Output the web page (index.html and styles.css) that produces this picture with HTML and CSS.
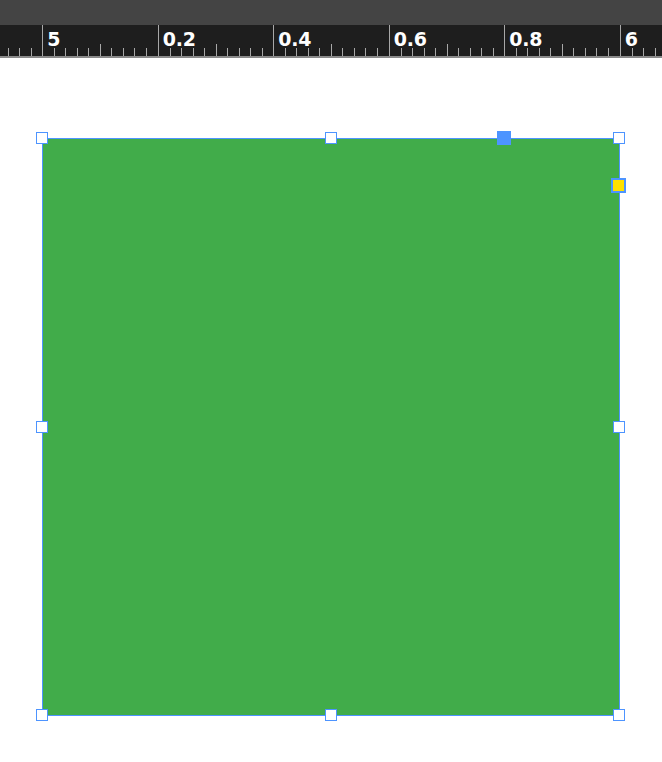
FILE: index.html
```html
<!DOCTYPE html>
<html>
<head>
<meta charset="utf-8">
<link rel="stylesheet" href="styles.css">
</head>
<body>
<div class="topbar"></div>
<div class="ruler">
  <div class="track">
    <div class="seg"></div>
    <div class="seg"><span class="lbl">5</span></div>
    <div class="seg"><span class="lbl">0.2</span></div>
    <div class="seg"><span class="lbl">0.4</span></div>
    <div class="seg"><span class="lbl">0.6</span></div>
    <div class="seg"><span class="lbl">0.8</span></div>
    <div class="seg"><span class="lbl">6</span></div>
  </div>
</div>
<div class="rule-line"></div>
<div class="canvas">
  <div class="shape">
    <span class="h h-tl"></span>
    <span class="h h-tm"></span>
    <span class="h h-tr"></span>
    <span class="h h-ml"></span>
    <span class="h h-mr"></span>
    <span class="h h-bl"></span>
    <span class="h h-bm"></span>
    <span class="h h-br"></span>
    <span class="rot"></span>
    <span class="adj"></span>
  </div>
</div>
</body>
</html>
```

FILE: styles.css
```css
html, body {
  margin: 0;
  padding: 0;
  background: #ffffff;
}
body {
  width: 662px;
  height: 762px;
  overflow: hidden;
  font-family: "DejaVu Sans", "Liberation Sans", sans-serif;
}
.topbar {
  height: 25px;
  background: #444444;
}
.ruler {
  height: 31px;
  background: #1e1e1e;
  overflow: hidden;
}
.track {
  display: flex;
  margin-left: -73.2px;
  height: 31px;
}
.seg {
  flex: 0 0 115.5px;
  width: 115.5px;
  height: 31px;
  box-sizing: border-box;
  border-left: 1px solid #a8a8a8;
  background-image:
    linear-gradient(#a8a8a8, #a8a8a8),
    repeating-linear-gradient(90deg, transparent 0, transparent 10.55px, #a8a8a8 10.55px, #a8a8a8 11.55px);
  background-size: 1px 12px, 100% 8px;
  background-position: 57px 100%, 0 100%;
  background-repeat: no-repeat, no-repeat;
}
.lbl {
  display: block;
  color: #ffffff;
  font-size: 19px;
  font-weight: bold;
  line-height: 19px;
  padding-left: 4px;
  padding-top: 5px;
  letter-spacing: -0.3px;
}
.rule-line {
  height: 2px;
  background: #8a8a8a;
}
.canvas {
  padding: 80px 0 0 42px;
}
.shape {
  position: relative;
  width: 578px;
  height: 578px;
  box-sizing: border-box;
  background: #41ac4a;
  border: 1px solid #4d94ff;
}
.h {
  position: absolute;
  width: 12px;
  height: 12px;
  box-sizing: border-box;
  background: #ffffff;
  border: 1.5px solid #4d94ff;
}
.h-tl { left: -7px; top: -7px; }
.h-tm { left: 282px; top: -7px; }
.h-tr { left: 570px; top: -7px; }
.h-ml { left: -7px; top: 282px; }
.h-mr { left: 570px; top: 282px; }
.h-bl { left: -7px; top: 570px; }
.h-bm { left: 282px; top: 570px; }
.h-br { left: 570px; top: 570px; }
.rot {
  position: absolute;
  left: 454px;
  top: -8px;
  width: 14px;
  height: 14px;
  background: #4d94ff;
}
.adj {
  position: absolute;
  left: 568px;
  top: 39px;
  width: 15px;
  height: 15px;
  box-sizing: border-box;
  background: #ffe100;
  border: 2px solid #4d94ff;
}
```
